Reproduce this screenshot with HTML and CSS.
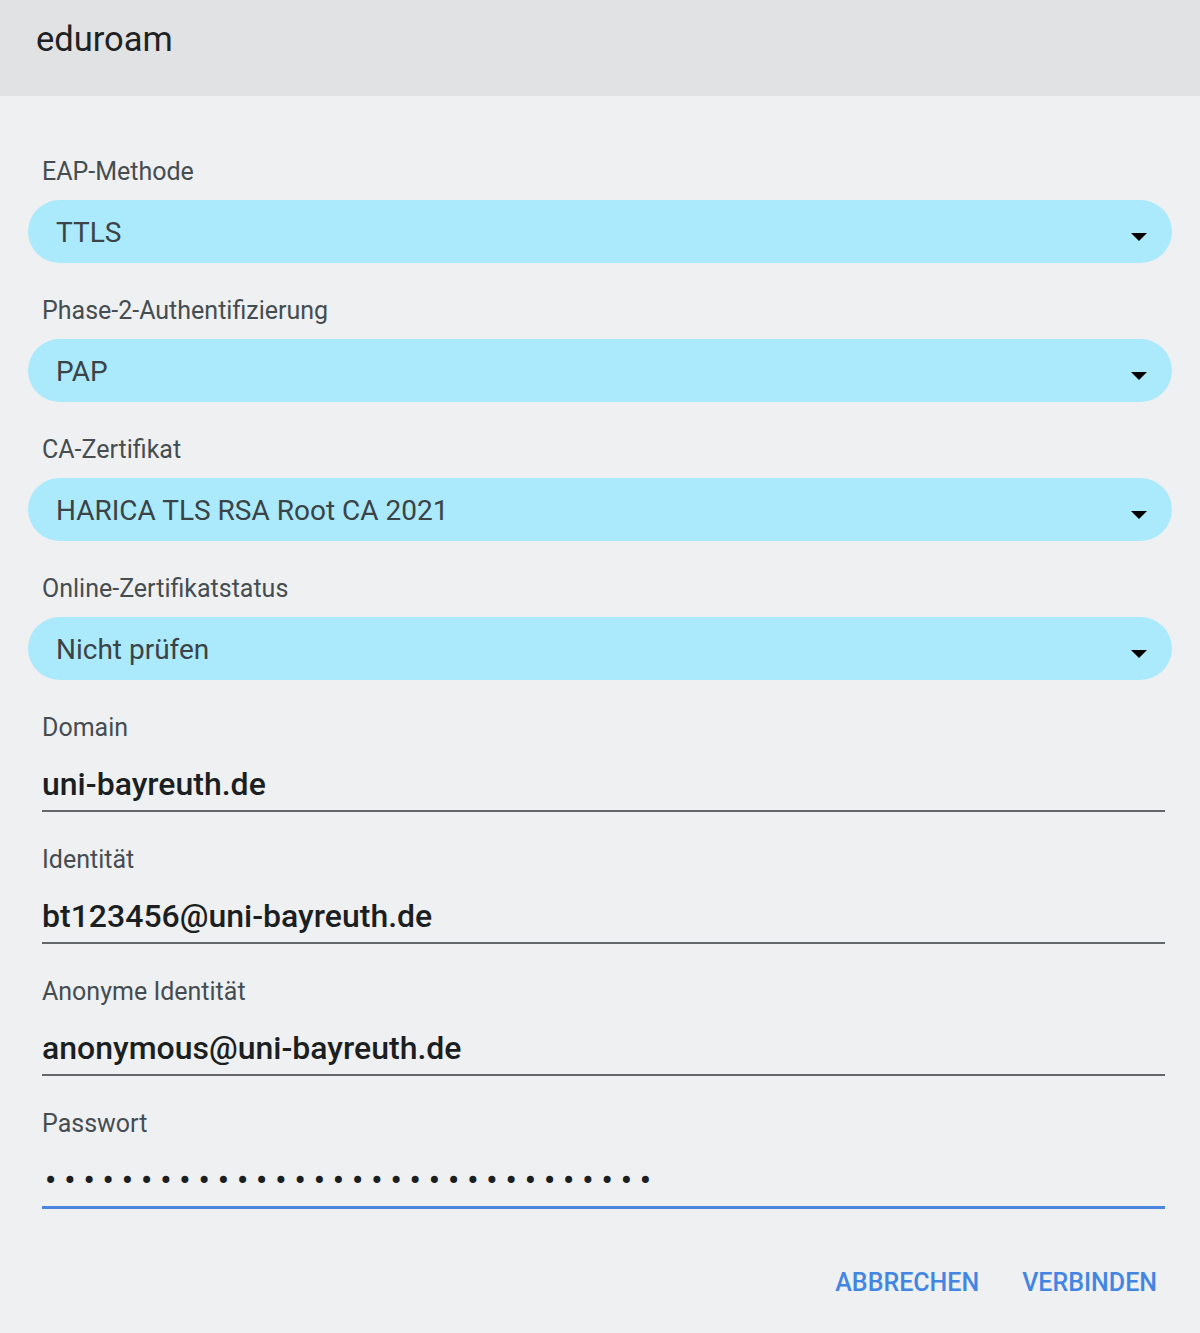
FILE: index.html
```html
<!DOCTYPE html>
<html lang="de">
<head>
<meta charset="utf-8">
<title>eduroam</title>
<link rel="stylesheet" href="styles.css">
</head>
<body>
<div class="dialog">
  <header class="dialog-header">eduroam</header>
  <main class="dialog-body">
    <div class="field">
      <div class="label">EAP-Methode</div>
      <div class="select"><span class="select-value">TTLS</span><span class="arrow"></span></div>
    </div>
    <div class="field">
      <div class="label">Phase-2-Authentifizierung</div>
      <div class="select"><span class="select-value">PAP</span><span class="arrow"></span></div>
    </div>
    <div class="field">
      <div class="label">CA-Zertifikat</div>
      <div class="select"><span class="select-value">HARICA TLS RSA Root CA 2021</span><span class="arrow"></span></div>
    </div>
    <div class="field">
      <div class="label">Online-Zertifikatstatus</div>
      <div class="select"><span class="select-value">Nicht prüfen</span><span class="arrow"></span></div>
    </div>
    <div class="field">
      <div class="label">Domain</div>
      <div class="input">uni-bayreuth.de</div>
    </div>
    <div class="field">
      <div class="label">Identität</div>
      <div class="input">bt123456@uni-bayreuth.de</div>
    </div>
    <div class="field">
      <div class="label">Anonyme Identität</div>
      <div class="input">anonymous@uni-bayreuth.de</div>
    </div>
    <div class="field">
      <div class="label">Passwort</div>
      <div class="input input-focused password">••••••••••••••••••••••••••••••••</div>
    </div>
  </main>
  <footer class="actions">
    <span class="btn">ABBRECHEN</span>
    <span class="btn">VERBINDEN</span>
  </footer>
</div>
</body>
</html>
```
FILE: styles.css
```css
html, body {
  margin: 0;
  padding: 0;
  background: #eff0f2;
  font-family: Roboto, "Noto Sans", sans-serif;
}

.dialog {
  width: 1200px;
  height: 1333px;
  background: #eff0f2;
}

.dialog-header {
  height: 96px;
  box-sizing: border-box;
  background: #e1e2e4;
  padding: 18px 0 0 36px;
  font-size: 34.5px;
  line-height: 42px;
  color: #1f2224;
}

.dialog-body {
  padding: 61px 28px 0 28px;
  display: flex;
  flex-direction: column;
  gap: 33px;
}

.field {
  display: flex;
  flex-direction: column;
}

.label {
  padding: 1px 0 0 14px;
  font-size: 25px;
  line-height: 28px;
  color: #454d50;
  margin-bottom: 14px;
}

.select {
  height: 63px;
  border-radius: 32px;
  background: #aaeafc;
  display: flex;
  align-items: center;
  justify-content: space-between;
  padding: 0 25px 0 28px;
}

.select-value {
  font-size: 28px;
  padding-top: 2px;
  color: #3b4346;
}

.arrow {
  width: 0;
  height: 0;
  margin-top: 10px;
  border-left: 8px solid transparent;
  border-right: 8px solid transparent;
  border-top: 8px solid #000;
}

.field .label + .input {
  margin-top: -14px;
}

.input {
  margin: 0 7px 0 14px;
  padding: 22px 0 6px 0;
  font-size: 32px;
  line-height: 40px;
  font-weight: 500;
  color: #1c1f22;
  border-bottom: 2px solid #63696b;
}

.input-focused {
  border-bottom: 3px solid #4a86e0;
}

.password {
  letter-spacing: 8px;
  padding-left: 3px;
}

.actions {
  display: flex;
  justify-content: flex-end;
  gap: 43px;
  padding: 59px 43px 0 0;
}

.btn {
  font-size: 25px;
  line-height: 28px;
  padding-top: 1px;
  font-weight: 500;
  color: #4285e3;
}
```
